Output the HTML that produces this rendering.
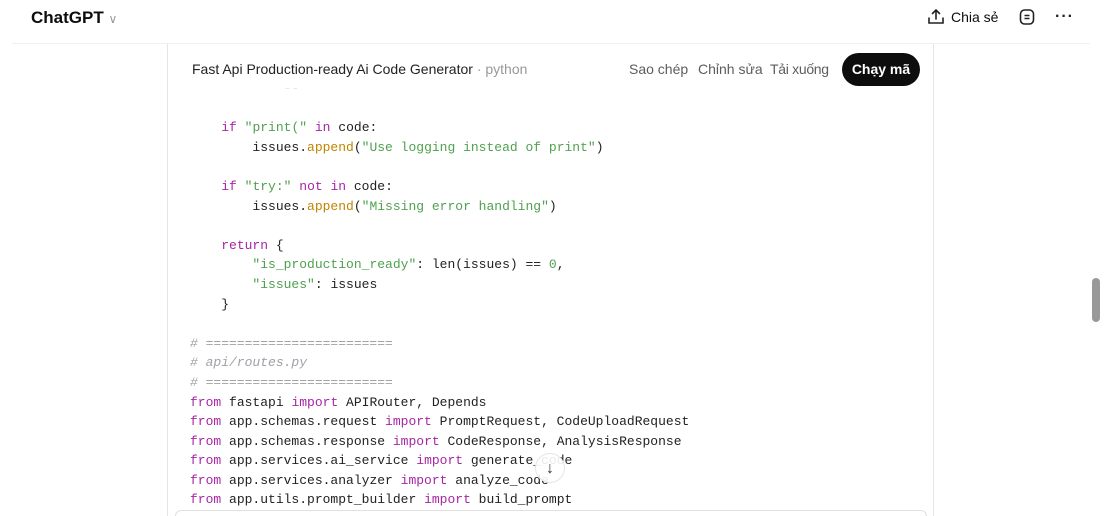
<!DOCTYPE html>
<html><head><meta charset="utf-8"><style>
html,body{margin:0;width:1104px;height:516px;overflow:hidden;background:#fff}
body{font-family:"Liberation Sans","DejaVu Sans",sans-serif;position:relative}
.top{position:absolute;left:31px;top:8px;font-size:17px;font-weight:bold;color:#0d0d0d}
.top span{font-weight:normal;color:#999;font-size:12px}
.hl{position:absolute;left:12px;right:14px;top:43px;height:1px;background:#f0f0f0}
.card{position:absolute;left:167px;top:44px;width:767px;height:472px;border-left:1px solid #e5e5e5;border-right:1px solid #e5e5e5;box-sizing:border-box}
.title{position:absolute;left:192px;top:61px;font-size:14px;color:#222}
.title span{color:#999}
.acts{position:absolute;top:61px;font-size:14px;color:#5d5d5d}
.btn{position:absolute;left:842px;top:53px;width:78px;height:33px;background:#0d0d0d;border-radius:17px;color:#fff;font-weight:bold;font-size:14px;text-align:center;line-height:33px}
pre{position:absolute;left:190px;top:79px;margin:0;font-family:"Liberation Mono","DejaVu Sans Mono",monospace;font-size:13px;line-height:19.6px;color:#222}
.k{color:#a626a4}.s{color:#50a14f}.f{color:#c18401}.c{color:#a0a1a7;font-style:italic}
.sb{position:absolute;left:1092px;top:278px;width:8px;height:44px;background:#999;border-radius:4px}
.down{position:absolute;left:535px;top:453px;width:30px;height:30px;border-radius:50%;border:1px solid #e5e5e5;background:rgba(255,255,255,.9);text-align:center;line-height:30px;font-size:16px;color:#333;box-sizing:border-box}
.inp{position:absolute;left:175px;top:510px;width:752px;height:6px;border:1px solid #e0e0e0;border-bottom:none;border-radius:20px 20px 0 0;background:#fff;box-sizing:border-box}
</style></head><body>
<div class="top">ChatGPT <span>∨</span></div>
<svg style="position:absolute;left:927px;top:8px" width="18" height="18" viewBox="0 0 18 18" fill="none" stroke="#222" stroke-width="1.6" stroke-linecap="round"><path d="M9 11V2M5.5 5.5L9 2l3.5 3.5M2 10v5h14v-5"/></svg>
<div style="position:absolute;left:951px;top:9px;font-size:14px;color:#0d0d0d">Chia sẻ</div>
<svg style="position:absolute;left:1018px;top:8px" width="18" height="18" viewBox="0 0 18 18" fill="none" stroke="#222" stroke-width="1.6"><rect x="2.5" y="2" width="13" height="14" rx="4"/><path d="M6.5 7.5h5M6.5 10.5h5"/></svg>
<div style="position:absolute;left:1055px;top:9px;font-size:16px;font-weight:bold;color:#222;letter-spacing:1px;line-height:16px">···</div>
<div class="hl"></div>
<div class="card"></div>
<div class="title">Fast Api Production-ready Ai Code Generator <span>· python</span></div>
<div class="acts" style="left:629px">Sao chép</div>
<div class="acts" style="left:698px">Chỉnh sửa</div>
<div class="acts" style="left:770px;letter-spacing:-0.3px">Tải xuống</div>
<div class="btn">Chạy mã</div>
<pre>            --

    <span class="k">if</span> <span class="s">"print("</span> <span class="k">in</span> code:
        issues.<span class="f">append</span>(<span class="s">"Use logging instead of print"</span>)

    <span class="k">if</span> <span class="s">"try:"</span> <span class="k">not in</span> code:
        issues.<span class="f">append</span>(<span class="s">"Missing error handling"</span>)

    <span class="k">return</span> {
        <span class="s">"is_production_ready"</span>: len(issues) == <span class="s">0</span>,
        <span class="s">"issues"</span>: issues
    }

<span class="c"># ========================</span>
<span class="c"># api/routes.py</span>
<span class="c"># ========================</span>
<span class="k">from</span> fastapi <span class="k">import</span> APIRouter, Depends
<span class="k">from</span> app.schemas.request <span class="k">import</span> PromptRequest, CodeUploadRequest
<span class="k">from</span> app.schemas.response <span class="k">import</span> CodeResponse, AnalysisResponse
<span class="k">from</span> app.services.ai_service <span class="k">import</span> generate_code
<span class="k">from</span> app.services.analyzer <span class="k">import</span> analyze_code
<span class="k">from</span> app.utils.prompt_builder <span class="k">import</span> build_prompt</pre>
<div style="position:absolute;left:200px;top:80px;width:110px;height:12px;background:#fff;filter:blur(3px)"></div>
<div class="down">↓</div>
<div class="inp"></div>
<div class="sb"></div>
</body></html>
